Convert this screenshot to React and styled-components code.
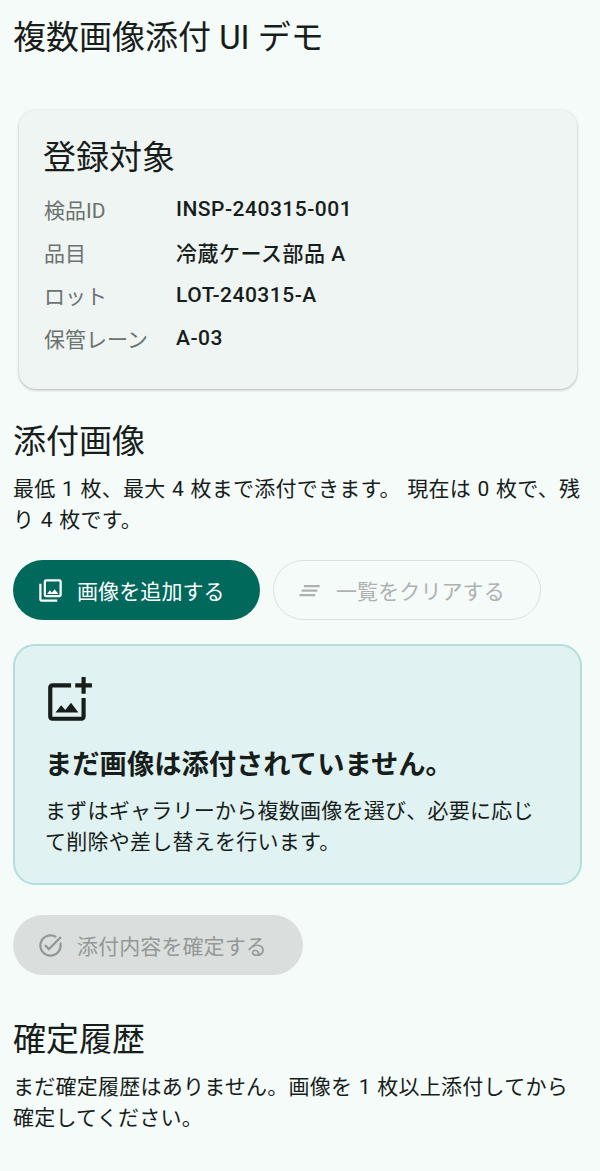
import React from "react";
import styled, { createGlobalStyle } from "styled-components";
import { MdOutlinePhotoLibrary, MdClearAll, MdOutlineAddPhotoAlternate, MdTaskAlt } from "react-icons/md";

const Global = createGlobalStyle`
  html, body { margin: 0; padding: 0; background: #f5fbf9; }
  body { font-family: Roboto, "Noto Sans CJK JP", sans-serif; color: #171d1b; }
  * { box-sizing: border-box; }
`;

const Page = styled.main`
  width: 600px;
  height: 1171px;
  overflow: hidden;
  padding: 15px 13px 0;
  display: flex;
  flex-direction: column;
  align-items: flex-start;
`;

const Title = styled.h1`
  margin: 0;
  font-size: 33px;
  line-height: 46px;
  font-weight: 400;
`;

const Card = styled.section`
  width: 558px;
  height: 279px;
  margin: 49px 0 0 6px;
  padding: 26px 25px;
  border-radius: 17px;
  background: #eff5f3;
  box-shadow: 0 1px 3px rgba(0, 0, 0, 0.28);
`;

const CardTitle = styled.h2`
  margin: 0 0 7px -1px;
  font-size: 33px;
  line-height: 44px;
  font-weight: 400;
`;

const Row = styled.div`
  display: grid;
  grid-template-columns: 132px 1fr;
  height: 43px;
  align-items: center;
  font-size: 21px;
`;

const Label = styled.span`
  color: #6b7270;
`;

const Value = styled.span`
  font-weight: 500;
  letter-spacing: 0.5px;
`;

const SectionTitle = styled.h2`
  margin: ${(p) => p.$mt}px 0 0;
  font-size: 33px;
  line-height: 44px;
  font-weight: 400;
`;

const Body = styled.p`
  margin: 10px 0 0;
  font-size: 21px;
  line-height: 31px;
  letter-spacing: 0.25px;
  word-spacing: 1px;
`;

const Actions = styled.div`
  display: flex;
  gap: 13px;
  margin-top: ${(p) => p.$mt}px;
`;

const Pill = styled.button`
  height: 60px;
  width: ${(p) => p.$w}px;
  padding: 0 0 0 ${(p) => p.$pl}px;
  border-radius: 30px;
  border: ${(p) => (p.$line ? "1.5px solid #dbe0de" : "none")};
  background: ${(p) => p.$bg};
  color: ${(p) => p.$fg};
  display: flex;
  align-items: center;
  gap: ${(p) => p.$gap}px;
  font-family: inherit;
  font-size: 21px;
  font-weight: 400;
  letter-spacing: 0.1px;
  svg { flex: none; width: 27px; height: 27px; }
`;

const Empty = styled.section`
  width: 569px;
  height: 241px;
  margin-top: 24px;
  padding: 29px 32px;
  border: 2px solid #b2dfdb;
  border-radius: 22px;
  background: #e0f2f1;
  svg { display: block; width: 50px; height: 50px; margin: 0 0 0 -3px; }
`;

const EmptyTitle = styled.h3`
  margin: 21px 0 0 -2px;
  font-size: 27.3px;
  line-height: 38px;
  font-weight: 700;
`;

const EmptyBody = styled.p`
  margin: 12px 0 0 -2px;
  font-size: 21px;
  line-height: 31px;
  letter-spacing: 0.25px;
`;

export default function App() {
  return (
    <Page>
      <Global />
      <Title>複数画像添付 UI デモ</Title>
      <Card>
        <CardTitle>登録対象</CardTitle>
        <Row><Label>検品ID</Label><Value>INSP-240315-001</Value></Row>
        <Row><Label>品目</Label><Value>冷蔵ケース部品 A</Value></Row>
        <Row><Label>ロット</Label><Value>LOT-240315-A</Value></Row>
        <Row><Label>保管レーン</Label><Value>A-03</Value></Row>
      </Card>
      <SectionTitle $mt={31}>添付画像</SectionTitle>
      <Body>最低 1 枚、最大 4 枚まで添付できます。 現在は 0 枚で、残り 4 枚です。</Body>
      <Actions $mt={24}>
        <Pill $w={247} $pl={24} $gap={13} $bg="#00695c" $fg="#fff"><MdOutlinePhotoLibrary />画像を追加する</Pill>
        <Pill $w={268} $pl={22} $gap={13} $line $bg="transparent" $fg="#adb2b0" disabled><MdClearAll />一覧をクリアする</Pill>
      </Actions>
      <Empty>
        <MdOutlineAddPhotoAlternate />
        <EmptyTitle>まだ画像は添付されていません。</EmptyTitle>
        <EmptyBody>まずはギャラリーから複数画像を選び、必要に応じて削除や差し替えを行います。</EmptyBody>
      </Empty>
      <Actions $mt={30}>
        <Pill $w={290} $pl={24} $gap={13} $bg="#dadfdd" $fg="#939896" disabled><MdTaskAlt />添付内容を確定する</Pill>
      </Actions>
      <SectionTitle $mt={43}>確定履歴</SectionTitle>
      <Body>まだ確定履歴はありません。画像を 1 枚以上添付してから確定してください。</Body>
    </Page>
  );
}
